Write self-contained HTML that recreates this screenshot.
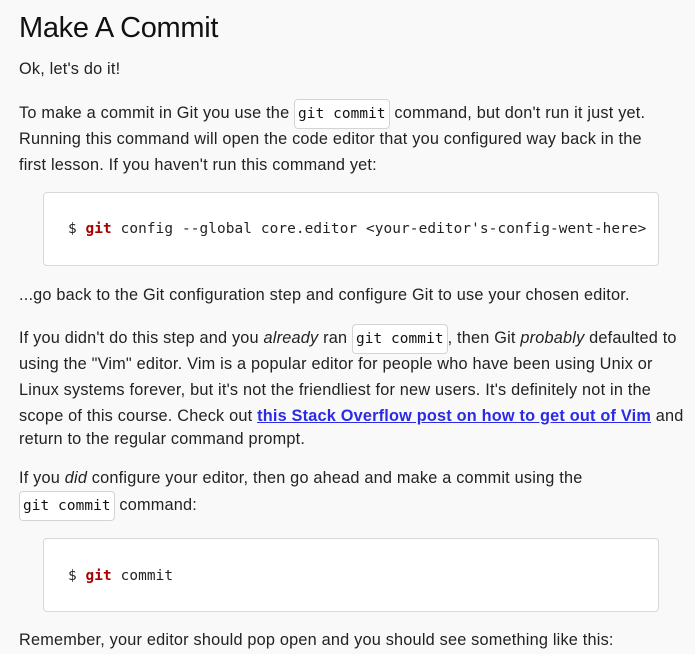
<!DOCTYPE html>
<html><head><meta charset="utf-8"><style>
html,body{margin:0;padding:0;background:#f9f9f9;width:695px;height:654px;overflow:hidden}
body{position:relative;font-family:"Liberation Sans",sans-serif;color:#222;font-size:16.3px;letter-spacing:0.2px}
.l{position:absolute;left:19px;white-space:nowrap;line-height:26px;height:26px}
h1{position:absolute;left:19px;top:10px;margin:0;font-weight:400;font-size:29px;letter-spacing:-0.3px;line-height:36px;color:#111}
code{font-family:"DejaVu Sans Mono","Liberation Mono",monospace;font-size:14.4px;letter-spacing:0.1px;background:#fff;border:1px solid #d4d4d4;border-radius:4px;padding:6px 3px;color:#111}
.pre{position:absolute;left:43px;width:614px;background:#fff;border:1px solid #d8d8d8;border-radius:4px;font-family:"DejaVu Sans Mono","Liberation Mono",monospace;font-size:14.4px;letter-spacing:0.1px;color:#222}
.pre span.t{position:absolute;left:24px;white-space:nowrap;line-height:20px}
.k{color:#a00;font-weight:bold}
a{color:#2b2be6;font-weight:bold;text-decoration:underline}
</style></head><body>
<h1>Make A Commit</h1>
<div class="l" style="top:56px">Ok, let's do it!</div>
<div class="l" style="top:100px">To make a commit in Git you use the <code>git commit</code> command, but don't run it just yet.</div>
<div class="l" style="top:126px">Running this command will open the code editor that you configured way back in the</div>
<div class="l" style="top:152px">first lesson. If you haven't run this command yet:</div>
<div class="pre" style="top:192px;height:72px"><span class="t" style="top:26px">$ <span class="k">git</span> config --global core.editor &lt;your-editor's-config-went-here&gt;</span></div>
<div class="l" style="top:282px">...go back to the Git configuration step and configure Git to use your chosen editor.</div>
<div class="l" style="top:325px">If you didn't do this step and you <i>already</i> ran <code>git commit</code>, then Git <i>probably</i> defaulted to</div>
<div class="l" style="top:351px">using the "Vim" editor. Vim is a popular editor for people who have been using Unix or</div>
<div class="l" style="top:377px">Linux systems forever, but it's not the friendliest for new users. It's definitely not in the</div>
<div class="l" style="top:403px">scope of this course. Check out <a>this Stack Overflow post on how to get out of Vim</a> and</div>
<div class="l" style="top:426px">return to the regular command prompt.</div>
<div class="l" style="top:465px">If you <i>did</i> configure your editor, then go ahead and make a commit using the</div>
<div class="l" style="top:492px"><code>git commit</code> command:</div>
<div class="pre" style="top:538px;height:72px"><span class="t" style="top:27px">$ <span class="k">git</span> commit</span></div>
<div class="l" style="top:627px">Remember, your editor should pop open and you should see something like this:</div>
</body></html>
